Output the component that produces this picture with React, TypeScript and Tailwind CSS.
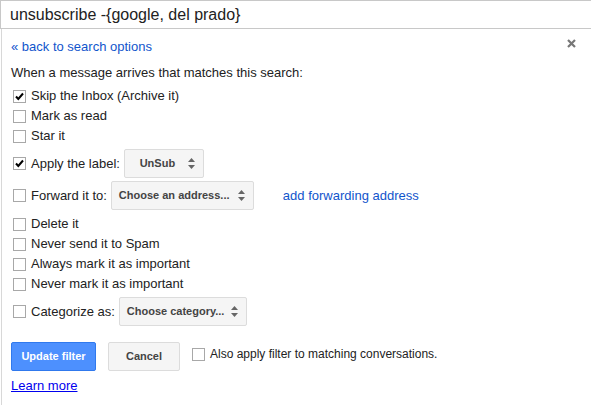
import React from 'react';

function Box({ checked = false }: { checked?: boolean }) {
  return (
    <span className="inline-flex w-[13px] h-[13px] shrink-0 border border-[#a8a8a8] bg-white items-center justify-center">
      {checked && (
        <svg width="11" height="11" viewBox="0 0 11 11">
          <path d="M2 5.5 L4.3 8 L9 2.5" fill="none" stroke="#000" strokeWidth="2" />
        </svg>
      )}
    </span>
  );
}

function Arrows() {
  return (
    <svg width="7" height="11" viewBox="0 0 7 11" className="shrink-0">
      <path d="M3.5 0 L7 4 L0 4 Z" fill="#666" />
      <path d="M3.5 11 L7 7 L0 7 Z" fill="#666" />
    </svg>
  );
}

function Select({ text, width, center = false }: { text: string; width: string; center?: boolean }) {
  return (
    <div
      className={`${width} h-[29px] flex items-center gap-[5px] pl-[7px] pr-[8px] bg-[#f5f5f5] border border-[#dcdcdc] rounded-[2px] text-[11px] font-bold text-[#444]`}
    >
      <span className={`flex-1 ${center ? 'text-center' : ''}`}>{text}</span>
      <Arrows />
    </div>
  );
}

function Row({ label, checked = false }: { label: string; checked?: boolean }) {
  return (
    <div className="flex items-center h-[20px] pl-[2px]">
      <Box checked={checked} />
      <span className="ml-[5px]">{label}</span>
    </div>
  );
}

export default function App() {
  return (
    <div className="w-[591px] h-[405px] bg-white text-[13px] text-[#222] overflow-hidden" style={{ fontFamily: '"Liberation Sans", Arial, sans-serif' }}>
      <div className="h-[29px] border-t border-l border-b border-[#c8c8c8] pl-[9px] flex items-center text-[16px] text-[#222]">
        unsubscribe -{'{'}google, del prado{'}'}
      </div>
      <div className="relative border-l border-[#d8d8d8] ml-[1px] h-[376px] pl-[9px] pt-[8px]">
        <svg width="9" height="9" viewBox="0 0 9 9" className="absolute right-[15px] top-[10px]">
          <path d="M1 1 L8 8 M8 1 L1 8" stroke="#777" strokeWidth="2.2" />
        </svg>
        <div className="h-[20px] flex items-center text-[#15c]">« back to search options</div>
        <div className="h-[20px] mt-[6px] flex items-center">When a message arrives that matches this search:</div>
        <div className="flex flex-col mt-[3px]">
          <Row label="Skip the Inbox (Archive it)" checked />
          <Row label="Mark as read" />
          <Row label="Star it" />
          <div className="flex items-center h-[29px] mt-[3px] pl-[2px]">
            <Box checked />
            <span className="ml-[5px]">Apply the label:</span>
            <div className="ml-[4px]">
              <Select text="UnSub" width="w-[80px]" center />
            </div>
          </div>
          <div className="flex items-center h-[29px] mt-[3px] pl-[2px]">
            <Box />
            <span className="ml-[5px]">Forward it to:</span>
            <div className="ml-[4px]">
              <Select text="Choose an address..." width="w-[143px]" />
            </div>
            <span className="ml-[29px] text-[#15c]">add forwarding address</span>
          </div>
          <div className="mt-[4px] flex flex-col">
            <Row label="Delete it" />
            <Row label="Never send it to Spam" />
            <Row label="Always mark it as important" />
            <Row label="Never mark it as important" />
          </div>
          <div className="flex items-center h-[29px] mt-[3px] pl-[2px]">
            <Box />
            <span className="ml-[5px]">Categorize as:</span>
            <div className="ml-[4px]">
              <Select text="Choose category..." width="w-[128px]" />
            </div>
          </div>
        </div>
        <div className="flex items-start mt-[16px]">
          <div className="w-[85px] h-[29px] rounded-[2px] bg-[#4d90fe] border border-[#3079ed] text-white text-[11px] font-bold flex items-center justify-center">
            Update filter
          </div>
          <div className="ml-[12px] w-[72px] h-[29px] rounded-[2px] bg-[#f5f5f5] border border-[#dcdcdc] text-[#444] text-[11px] font-bold flex items-center justify-center">
            Cancel
          </div>
          <div className="ml-[12px] mt-[3px] flex items-center">
            <Box />
            <span className="ml-[5px] text-[12px]">Also apply filter to matching conversations.</span>
          </div>
        </div>
        <div className="mt-[7px] h-[16px] flex items-center text-[#00e] underline">Learn more</div>
      </div>
    </div>
  );
}
